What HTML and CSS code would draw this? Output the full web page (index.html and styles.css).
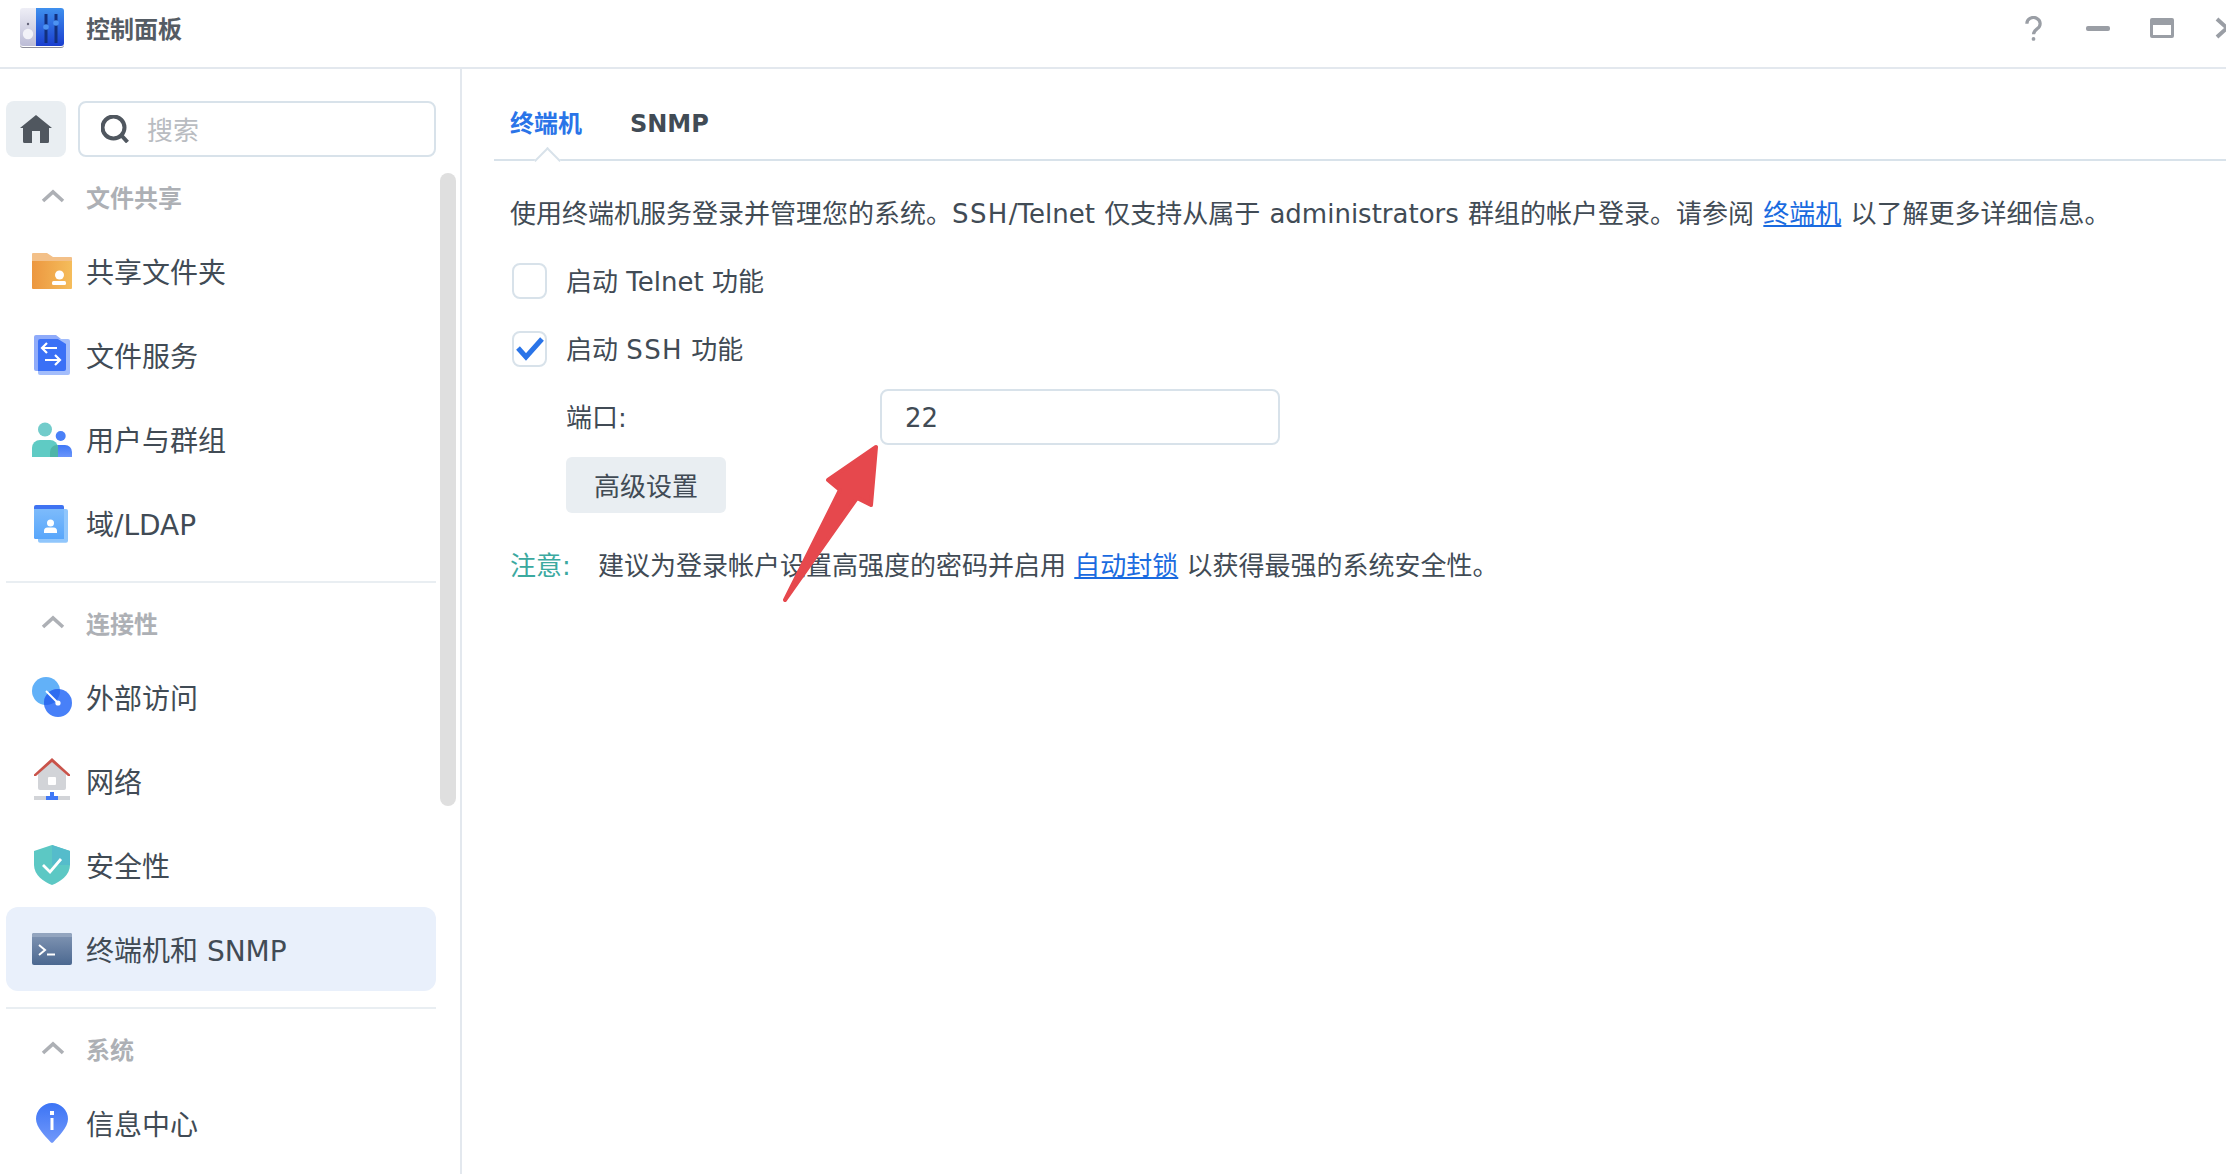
FILE: index.html
```html
<!DOCTYPE html>
<html lang="zh-CN">
<head>
    <meta charset="UTF-8">
    <meta name="viewport" content="width=device-width, initial-scale=1.0">
    <title>控制面板</title>
    <link rel="stylesheet" href="styles.css">
</head>
<body>
    <header class="titlebar">
        <svg class="app-logo" viewBox="0 0 44 40">
            <defs>
                <linearGradient id="logo-grey" x1="0" y1="0" x2="0" y2="1"><stop offset="0" stop-color="#eeeef6"/><stop offset="1" stop-color="#bcbcd6"/></linearGradient>
                <linearGradient id="logo-blue" x1="0" y1="0" x2="0" y2="1"><stop offset="0" stop-color="#3f90ee"/><stop offset="1" stop-color="#1a3ecf"/></linearGradient>
            </defs>
            <path d="M3 0H16V38H3a3 3 0 0 1-3-3V3a3 3 0 0 1 3-3z" fill="url(#logo-grey)"/>
            <path d="M16 0H41a3 3 0 0 1 3 3V35a3 3 0 0 1-3 3H16z" fill="url(#logo-blue)"/>
            <path d="M0 36a3 3 0 0 0 3 3H41a3 3 0 0 0 3-3v1a3 3 0 0 1-3 3H3a3 3 0 0 1-3-3z" fill="#8d8d99"/>
            <circle cx="8" cy="16" r="1.2" fill="#66667a"/>
            <circle cx="8" cy="26" r="5.2" fill="#f2f2f8"/>
            <rect x="24.5" y="6" width="3" height="29" fill="#12307e"/>
            <rect x="34.5" y="6" width="3" height="29" fill="#12307e"/>
            <circle cx="26" cy="19" r="2.8" fill="#4d93f2"/>
            <circle cx="36" cy="15" r="2.8" fill="#4d93f2"/>
        </svg>
        <span class="app-name">控制面板</span>
        <div class="window-actions">
            <svg class="win-help" viewBox="0 0 18 26"><path d="M2 8a7 6.5 0 1 1 11 5.200c-2.600 1.900-4 2.800-4 6" fill="none" stroke="#9a9ea5" stroke-width="3.400"/><circle cx="9" cy="24" r="2" fill="#9a9ea5"/></svg>
            <span class="win-min"></span>
            <svg class="win-max" viewBox="0 0 24 20"><path d="M2 0H22a2 2 0 0 1 2 2V18a2 2 0 0 1-2 2H2a2 2 0 0 1-2-2V2A2 2 0 0 1 2 0zM3 7V17H21V7z" fill="#9a9ea5" fill-rule="evenodd"/></svg>
            <svg class="win-close" viewBox="0 0 24 22"><path d="M2 2L22 20M22 2L2 20" fill="none" stroke="#9a9ea5" stroke-width="4"/></svg>
        </div>
    </header>

    <div class="layout">
        <aside class="sidebar">
            <nav class="side-nav">
                <div class="search-row">
                    <button class="home-btn" type="button">
                        <svg class="home-icon" viewBox="0 0 32 28"><path d="M16 0L32 13H29V26.500a1.500 1.500 0 0 1-1.500 1.500H4.500A1.500 1.500 0 0 1 3 26.500V13H0zM12 16V28H20V16z" fill="#50575f" fill-rule="evenodd"/></svg>
                    </button>
                    <div class="search-box">
                        <svg class="search-icon" viewBox="0 0 28 28"><circle cx="12.500" cy="12.500" r="11" fill="none" stroke="#50575f" stroke-width="4"/><path d="M20 20L26.500 27" stroke="#50575f" stroke-width="4"/></svg>
                        <span class="placeholder">搜索</span>
                    </div>
                </div>

                <div class="group-title">
                    <svg class="chevron" viewBox="0 0 24 14"><path d="M2 12L12 3L22 12" fill="none" stroke="#adb0b5" stroke-width="3.600"/></svg>
                    <span>文件共享</span>
                </div>
                <a class="nav-item">
                    <svg class="icon" viewBox="0 0 40 40">
                        <defs><linearGradient id="folder" x1="0" y1="0" x2="1" y2="0"><stop offset="0" stop-color="#ec9740"/><stop offset="1" stop-color="#f5bd5b"/></linearGradient></defs>
                        <path d="M1 2H15L21 6H39a1 1 0 0 1 1 1V14H0V3a1 1 0 0 1 1-1z" fill="#f3c088"/>
                        <path d="M0 10H40V37a1 1 0 0 1-1 1H1a1 1 0 0 1-1-1z" fill="url(#folder)"/>
                        <circle cx="27.500" cy="24" r="4.500" fill="#fff"/>
                        <rect x="20" y="30" width="14" height="4" rx="1.500" fill="#fff"/>
                    </svg>
                    <span>共享文件夹</span>
                </a>
                <a class="nav-item">
                    <svg class="icon" viewBox="0 0 40 40">
                        <path d="M4 0H24L34 8V34a2 2 0 0 1-2 2H4a2 2 0 0 1-2-2V2a2 2 0 0 1 2-2z" fill="#8fabfa"/>
                        <rect x="6" y="4" width="32" height="36" rx="2" fill="#a3bdfb"/>
                        <path d="M8 4H26L34 9V34a2 2 0 0 1-2 2H6V6a2 2 0 0 1 2-2z" fill="#3a70f6"/>
                        <path d="M25 13H10M15 8L10 13L15 18M13 25H28M23 20L28 25L23 30" fill="none" stroke="#fff" stroke-width="2.200"/>
                    </svg>
                    <span>文件服务</span>
                </a>
                <a class="nav-item">
                    <svg class="icon" viewBox="0 0 40 40">
                        <defs><linearGradient id="user-blue" x1="0" y1="0" x2="0" y2="1"><stop offset="0" stop-color="#3f78f6"/><stop offset="1" stop-color="#6a95fa"/></linearGradient></defs>
                        <circle cx="28.700" cy="17" r="5" fill="#4a80f8"/>
                        <path d="M18 38V33a7 7 0 0 1 7-7H33a7 7 0 0 1 7 7V38z" fill="url(#user-blue)"/>
                        <circle cx="13" cy="10.500" r="7" fill="#72cccb"/>
                        <path d="M0 38V29a8 8 0 0 1 8-8H18a8 8 0 0 1 8 8V38z" fill="#5fcbc4"/>
                        <path d="M18 38V33a7 7 0 0 1 7-6.900a8 8 0 0 1 1 2.900V38z" fill="#4fb5a8"/>
                    </svg>
                    <span>用户与群组</span>
                </a>
                <a class="nav-item">
                    <svg class="icon" viewBox="0 0 40 40">
                        <defs><linearGradient id="domain" x1="0" y1="0" x2="0" y2="1"><stop offset="0" stop-color="#7dbbfb"/><stop offset="1" stop-color="#58a6fb"/></linearGradient></defs>
                        <path d="M4 2H30a2 2 0 0 1 2 2V36H4a2 2 0 0 1-2-2V4a2 2 0 0 1 2-2z" fill="#3f73f2"/>
                        <rect x="6" y="6" width="30" height="33.700" rx="2" fill="#90c6fc"/>
                        <path d="M2 6H32V36H4a2 2 0 0 1-2-2z" fill="url(#domain)"/>
                        <circle cx="18.500" cy="20" r="3.500" fill="#fff"/>
                        <path d="M12 30V28a3.500 3.500 0 0 1 3.500-3.500H21.500a3.500 3.500 0 0 1 3.500 3.500V30z" fill="#fff"/>
                    </svg>
                    <span>域/LDAP</span>
                </a>

                <hr class="divider">
                <div class="group-title">
                    <svg class="chevron" viewBox="0 0 24 14"><path d="M2 12L12 3L22 12" fill="none" stroke="#adb0b5" stroke-width="3.600"/></svg>
                    <span>连接性</span>
                </div>
                <a class="nav-item">
                    <svg class="icon" viewBox="0 0 40 40">
                        <defs><clipPath id="ext-clip"><circle cx="14" cy="14" r="14"/></clipPath></defs>
                        <circle cx="14" cy="14" r="14" fill="#62b1f8"/>
                        <circle cx="26" cy="26" r="14" fill="#4880f8"/>
                        <circle cx="26" cy="26" r="14" fill="#2e6cf0" clip-path="url(#ext-clip)"/>
                        <path d="M14 14L26 26" stroke="#fff" stroke-width="2"/>
                        <circle cx="26" cy="26" r="2.600" fill="#fff"/>
                    </svg>
                    <span>外部访问</span>
                </a>
                <a class="nav-item">
                    <svg class="icon icon-free" viewBox="0 0 40 40">
                        <path d="M6 13L20 0L34 13V27a2 2 0 0 1-2 2H8a2 2 0 0 1-2-2z" fill="#d2d4d8"/>
                        <path d="M20 -3L38 13.500V15H36L20 1L4 15H2V13.500z" fill="#c9534a"/>
                        <rect x="16" y="16" width="8" height="8" rx="1" fill="#fff"/>
                        <rect x="2" y="35" width="36" height="4" fill="#d2d4d8"/>
                        <rect x="14" y="35" width="12" height="4" fill="#3f78f6"/>
                        <rect x="18" y="31" width="4" height="4" fill="#3f78f6"/>
                    </svg>
                    <span>网络</span>
                </a>
                <a class="nav-item">
                    <svg class="icon" viewBox="0 0 40 40">
                        <path d="M20 0L38 6V20C38 30 28 37 20 40C12 37 2 30 2 20V6z" fill="#5cc8c4"/>
                        <path d="M20 0L38 6V20H20z" fill="#55bccb"/>
                        <path d="M11 20L18 27L29 14" fill="none" stroke="#fff" stroke-width="2.800"/>
                    </svg>
                    <span>安全性</span>
                </a>
                <a class="nav-item active">
                    <svg class="icon" viewBox="0 0 40 40">
                        <defs><linearGradient id="term" x1="0" y1="0" x2="0" y2="1"><stop offset="0" stop-color="#8296b4"/><stop offset="1" stop-color="#4b6890"/></linearGradient></defs>
                        <rect x="0" y="4" width="40" height="32" rx="2" fill="url(#term)"/>
                        <path d="M2 4H38a2 2 0 0 1 2 2V8H0V6a2 2 0 0 1 2-2z" fill="#93a5bf"/>
                        <path d="M7 16L13 21L7 26" fill="none" stroke="#fff" stroke-width="2"/>
                        <rect x="15" y="24.500" width="8" height="2" fill="#fff"/>
                    </svg>
                    <span>终端机和 SNMP</span>
                </a>

                <hr class="divider">
                <div class="group-title">
                    <svg class="chevron" viewBox="0 0 24 14"><path d="M2 12L12 3L22 12" fill="none" stroke="#adb0b5" stroke-width="3.600"/></svg>
                    <span>系统</span>
                </div>
                <a class="nav-item">
                    <svg class="icon" viewBox="0 0 40 40">
                        <defs><linearGradient id="pin" x1="0" y1="0" x2="0" y2="1"><stop offset="0" stop-color="#3c74f5"/><stop offset="1" stop-color="#7299fa"/></linearGradient></defs>
                        <path d="M20 0A16 16 0 0 1 36 16C36 24 27 33 21.500 39a2 2 0 0 1-3 0C13 33 4 24 4 16A16 16 0 0 1 20 0z" fill="url(#pin)"/>
                        <rect x="18" y="8" width="4" height="4" fill="#fff"/>
                        <rect x="18.500" y="15" width="3" height="12" fill="#fff"/>
                    </svg>
                    <span>信息中心</span>
                </a>
            </nav>
            <div class="scroll-thumb"></div>
        </aside>

        <main class="content">
            <div class="tabs">
                <a class="tab active">终端机</a>
                <a class="tab">SNMP</a>
            </div>
            <div class="panel">
                <p class="intro">使用终端机服务登录并管理您的系统。<span class="caps">SSH</span>/Telnet 仅支持从属于 administrators 群组的帐户登录。请参阅 <a class="link">终端机</a> 以了解更多详细信息。</p>

                <label class="check-row">
                    <span class="checkbox"></span>
                    <span class="check-text">启动 Telnet 功能</span>
                </label>
                <label class="check-row second">
                    <span class="checkbox">
                        <svg class="tick" viewBox="0 0 28 24"><path d="M2 11L10 20L26 2" fill="none" stroke="#2a74e8" stroke-width="5"/></svg>
                    </span>
                    <span class="check-text">启动 <span class="caps">SSH</span> 功能</span>
                </label>

                <div class="port-row">
                    <span class="port-label">端口:</span>
                    <div class="port-input">22</div>
                </div>
                <button class="adv-btn" type="button">高级设置</button>

                <p class="note"><span class="note-tag">注意:</span>建议为登录帐户设置高强度的密码并启用 <a class="link">自动封锁</a> 以获得最强的系统安全性。</p>
            </div>
        </main>
    </div>

    <!-- red annotation arrow drawn over the page -->
    <svg class="arrow" viewBox="0 0 100 162">
        <path d="M96 4L91 62L77 55L5 157L60 47L48 37z" fill="#e6484d" stroke="#e6484d" stroke-width="4" stroke-linejoin="round"/>
    </svg>
</body>
</html>
```

FILE: styles.css
```css
/* page */
* {
    box-sizing: border-box;
}

html, body {
    height: 100%;
}

body {
    margin: 0;
    position: relative;
    overflow: hidden;
    background-color: #fff;
    color: #414b55;
    font-family: "DejaVu Sans", "Noto Sans CJK SC", sans-serif;
    font-size: 26px;
    display: flex;
    flex-direction: column;
}

/* title bar */
.titlebar {
    flex: none;
    height: 69px;
    border-bottom: 2px solid #e3e8ee;
    display: flex;
    align-items: center;
    padding: 0 0 11px 20px;
}

.app-logo {
    width: 44px;
    height: 40px;
}

.app-name {
    margin: 0 0 2px 22px;
    font-size: 24px;
    font-weight: 700;
    color: #555c64;
}

.window-actions {
    margin-left: auto;
    margin-right: -13px;
    display: flex;
    align-items: center;
    flex: none;
}

.win-help {
    width: 17px;
    height: 25px;
}

.win-min {
    width: 24px;
    height: 5px;
    border-radius: 2px;
    background-color: #9a9ea5;
    margin-left: 44px;
}

.win-max {
    width: 24px;
    height: 20px;
    margin-left: 40px;
}

.win-close {
    width: 24px;
    height: 22px;
    flex: none;
    margin-left: 41px;
}

.layout {
    flex: 1;
    display: flex;
    min-height: 0;
}

/* sidebar */
.sidebar {
    flex: none;
    width: 462px;
    border-right: 2px solid #e3e8ee;
    padding-left: 6px;
    display: flex;
    overflow: hidden;
}

.side-nav {
    flex: none;
    width: 430px;
    padding-top: 32px;
}

.scroll-thumb {
    flex: none;
    width: 16px;
    height: 633px;
    margin: 104px 0 0 4px;
    border-radius: 8px;
    background-color: #dfdfdf;
}

.search-row {
    display: flex;
    gap: 12px;
    height: 56px;
}

.home-btn {
    width: 60px;
    height: 56px;
    border: none;
    border-radius: 8px;
    background-color: #e9eef2;
    padding: 0;
    display: flex;
    align-items: center;
    justify-content: center;
}

.home-icon {
    width: 32px;
    height: 28px;
}

.search-box {
    flex: 1;
    border: 2px solid #d8e2ea;
    border-radius: 8px;
    display: flex;
    align-items: center;
    padding-left: 21px;
}

.search-icon {
    width: 28px;
    height: 28px;
}

.placeholder {
    margin: 0 0 2px 18px;
    font-size: 26px;
    color: #b9bcc1;
}

.group-title {
    height: 72px;
    padding: 6px 0 0 35px;
    display: flex;
    align-items: center;
    font-size: 24px;
    font-weight: 700;
    color: #adb0b5;
}

.chevron {
    width: 24px;
    height: 14px;
    margin-right: 21px;
}

.nav-item {
    height: 84px;
    padding-left: 26px;
    display: flex;
    align-items: center;
    gap: 14px;
    font-size: 28px;
    border-radius: 12px;
}

.nav-item.active {
    background-color: #e9f0fb;
}

.icon {
    flex: none;
    width: 40px;
    height: 40px;
}

.icon-free {
    overflow: visible;
}

.divider {
    height: 2px;
    margin: 16px 0 0;
    border: none;
    background-color: #e9eef2;
}

/* main panel */
.content {
    flex: 1;
    min-width: 0;
    padding-left: 32px;
}

.tabs {
    height: 92px;
    padding: 38px 0 0 16px;
    display: flex;
    gap: 48px;
    border-bottom: 2px solid #d8e2ea;
}

.tab {
    position: relative;
    height: 34px;
    line-height: 34px;
    font-size: 24px;
    font-weight: 700;
}

.tab.active {
    color: #2a74e8;
}

.tab.active::after {
    content: "";
    position: absolute;
    left: 50%;
    top: 44px;
    width: 17px;
    height: 17px;
    margin-left: -8px;
    background-color: #fff;
    border-top: 2px solid #d8e2ea;
    border-left: 2px solid #d8e2ea;
    transform: rotate(45deg);
}

.panel {
    padding: 36px 0 0 16px;
    line-height: 34px;
}

.intro {
    margin: 0;
    white-space: nowrap;
    word-spacing: 1px;
}

.caps {
    letter-spacing: 1.4px;
}

.link {
    color: #1a6be0;
    text-decoration: underline;
}

.check-row {
    display: flex;
    align-items: center;
    gap: 19px;
    height: 36px;
    margin: 32px 0 0 2px;
}

.check-row.second {
    margin-top: 32px;
}

.check-text {
    padding-top: 2px;
}

.checkbox {
    flex: none;
    width: 35px;
    height: 36px;
    border: 2px solid #d8e2ea;
    border-radius: 8px;
    display: flex;
    align-items: center;
    justify-content: center;
}

.tick {
    flex: none;
    width: 28px;
    height: 24px;
}

.port-row {
    display: flex;
    align-items: center;
    margin: 22px 0 0 56px;
}

.port-label {
    width: 314px;
    padding-top: 2px;
}

.port-input {
    width: 400px;
    height: 56px;
    border: 2px solid #d8e2ea;
    border-radius: 8px;
    padding-left: 23px;
    line-height: 54px;
}

.adv-btn {
    display: block;
    width: 160px;
    height: 56px;
    margin: 12px 0 0 56px;
    padding: 0 0 2px;
    border: none;
    border-radius: 6px;
    background-color: #e9eef2;
    color: #414b55;
    font-family: inherit;
    font-size: 26px;
}

.note {
    margin: 36px 0 0;
    white-space: nowrap;
}

.note-tag {
    display: inline-block;
    width: 88px;
    color: #3ba99f;
}

/* annotation */
.arrow {
    position: absolute;
    left: 780px;
    top: 443px;
    width: 100px;
    height: 162px;
}
```
